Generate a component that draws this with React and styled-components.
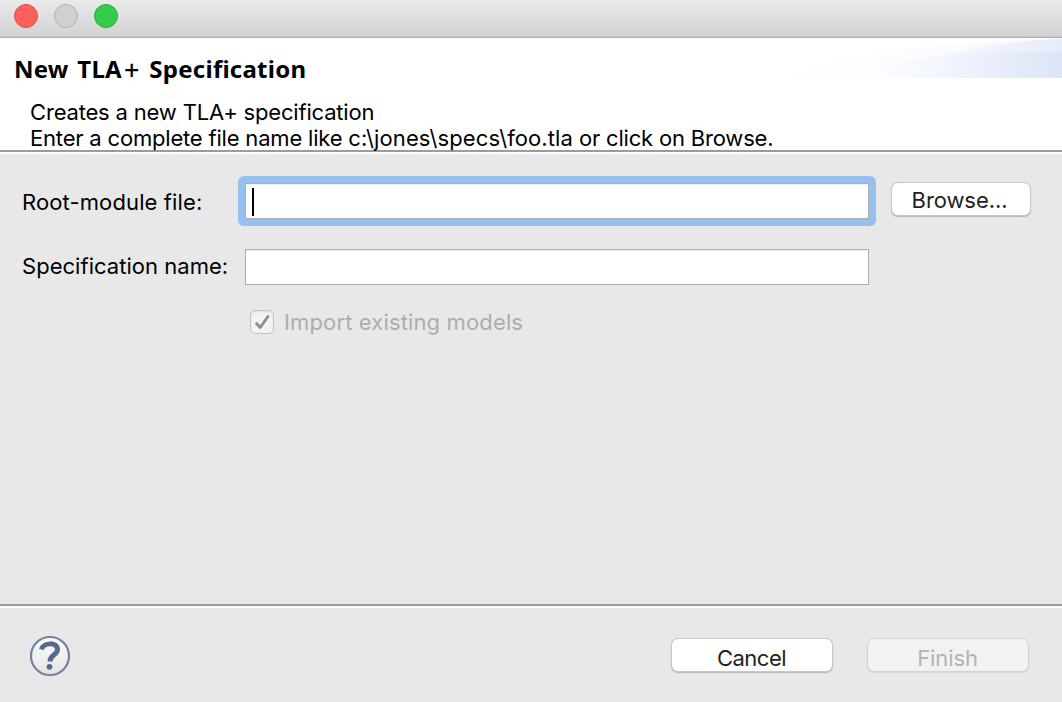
import React from 'react';
import styled, { createGlobalStyle } from 'styled-components';

const GlobalStyle = createGlobalStyle`
  *, *::before, *::after { box-sizing: border-box; }
  body { margin: 0; overflow: hidden; }
`;

const Window = styled.main`
  display: flex;
  flex-direction: column;
  width: 1062px;
  height: 702px;
  background: #e8e8e8;
  color: #000;
  font: 400 22px/26px Inter, 'Liberation Sans', sans-serif;
`;

const TitleBar = styled.div`
  display: flex;
  flex: none;
  gap: 16px;
  height: 38px;
  padding: 4px 14px 0;
  background: linear-gradient(#eaeaea, #d2d2d2);
  border-bottom: 1px solid #adadad;
  box-shadow: inset 0 -1px #c8c8c8;
`;

const WindowLight = styled.span`
  width: 24px;
  height: 24px;
  border: 1px solid ${(p) => p.$edge};
  border-radius: 50%;
  background: ${(p) => p.$fill};
`;

const Header = styled.header`
  position: relative;
  flex: none;
  height: 116px;
  padding: 17px 14px 0;
  background: #fff;
  border-bottom: 2px solid #fff;
  box-shadow: inset 0 -2px #9b9b9b;
`;

const Banner = styled.svg`
  position: absolute;
  top: 0;
  right: 0;
`;

const Title = styled.h1`
  margin: 0 0 16px;
  font: 700 24px/28px 'Noto Sans', 'Open Sans', sans-serif;
  letter-spacing: 0.25px;
  word-spacing: 2.2px;
  white-space: nowrap;
`;

const Plus = styled.span`
  position: relative;
  top: 2px;
  margin: 0 1px 0 2px;
  font-size: 27px;
  line-height: 20px;
  font-weight: 500;
`;

const Message = styled.p`
  margin: 0 0 0 16px;
  line-height: 26px;
  letter-spacing: ${(p) => p.$tracking};
  white-space: nowrap;
`;

const Path = styled.span`
  letter-spacing: 0.1px;
`;

const Form = styled.section`
  display: grid;
  flex: 1;
  grid-template-columns: 223px 624px 140px;
  grid-template-rows: 36px 36px 24px;
  row-gap: 30px;
  padding: 29px 0 0 22px;
`;

const Label = styled.label`
  padding-top: ${(p) => p.$padTop}px;
  letter-spacing: ${(p) => p.$tracking};
  white-space: nowrap;
`;

const FocusRing = styled.div`
  width: 638px;
  height: 50px;
  margin: -7px;
  padding: 7px;
  border-radius: 6px;
  background: #96c0f0;
`;

const Field = styled.div`
  display: flex;
  align-items: center;
  width: 624px;
  height: 36px;
  padding-left: 6px;
  background: #fff;
  border: 1px solid #adadad;
  box-shadow: inset 0 1px #f0f0f0;
`;

const Caret = styled.span`
  width: 2px;
  height: 28px;
  margin-top: 2px;
  background: #000;
`;

const Button = styled.button`
  display: block;
  width: ${(p) => p.$width}px;
  height: 32px;
  margin: ${(p) => p.$margin || '0'};
  padding: ${(p) => p.$padding || '0'};
  border: 0;
  border-radius: 6px;
  background: #fff;
  box-shadow: 0 0 0 1px #c6c6c6, 0 1px 1px 1px #b4b4b4;
  color: #222;
  font: inherit;
  line-height: 26px;
  letter-spacing: ${(p) => p.$tracking};
  text-align: center;
  &:disabled {
    background: #f2f2f2;
    box-shadow: 0 0 0 1px #d3d3d3, 0 1px 1px 1px #d6d6d6;
    color: #b3b3b3;
  }
`;

const CheckRow = styled.div`
  display: flex;
  grid-column: 2;
  align-items: center;
  gap: 10px;
  margin-top: -5px;
  height: 24px;
  padding-left: 5px;
  color: #adadad;
  letter-spacing: 0.14px;
  white-space: nowrap;
`;

const CheckBox = styled.span`
  flex: none;
  width: 24px;
  height: 24px;
  border: 1px solid #c3c3c3;
  border-radius: 5px;
  background: #f3f3f3;
  box-shadow: inset 0 1px 2px #ddd;
  svg { display: block; }
`;

const Footer = styled.footer`
  display: flex;
  flex: none;
  align-items: flex-start;
  height: 98px;
  padding: 33px 34px 0 29px;
  border-top: 2px solid #9b9b9b;
  box-shadow: inset 0 2px #fff;
`;

const HelpIcon = styled.svg`
  display: block;
  margin: -4px auto 0 0;
`;

export default function App() {
  return (
    <Window>
      <GlobalStyle />
      <TitleBar>
        <WindowLight $fill="#fe605b" $edge="#e24c49" />
        <WindowLight $fill="#d0d0d0" $edge="#b2b2b2" />
        <WindowLight $fill="#35cb4b" $edge="#27ae38" />
      </TitleBar>
      <Header>
        <Banner width="280" height="40" viewBox="0 0 280 40" aria-hidden="true">
          <defs>
            <linearGradient id="sweep">
              <stop offset="0" stopColor="#fefeff" />
              <stop offset="1" stopColor="#f8fafe" />
            </linearGradient>
            <linearGradient id="swell" gradientUnits="userSpaceOnUse" x1="130" x2="280">
              <stop offset="0" stopColor="#fafcff" />
              <stop offset=".35" stopColor="#f3f6fe" />
              <stop offset="1" stopColor="#e6ecf9" />
            </linearGradient>
            <linearGradient id="wave" gradientUnits="userSpaceOnUse" x1="80" x2="280">
              <stop offset="0" stopColor="#fdfeff" />
              <stop offset=".35" stopColor="#f4f7fe" />
              <stop offset="1" stopColor="#dde4f6" />
            </linearGradient>
          </defs>
          <path d="M5 40C50 22 115 9 190 4L280 0V40Z" fill="url(#sweep)" />
          <path d="M130 22C180 14 215 3 280 1V30H130Z" fill="url(#swell)" />
          <path d="M80 40V27C130 22 170 14 280 13V40Z" fill="url(#wave)" />
        </Banner>
        <Title>New TLA<Plus>+</Plus> Specification</Title>
        <Message $tracking="-0.18px">Creates a new TLA+ specification</Message>
        <Message $tracking="-0.19px">Enter a complete file name like <Path>c:\jones\specs\foo.tla</Path> or click on Browse.</Message>
      </Header>
      <Form>
        <Label $padTop={6} $tracking="0.12px">Root-module file:</Label>
        <FocusRing><Field><Caret /></Field></FocusRing>
        <Button $width={138} $margin="0 0 0 23px" $padding="1px 3px 0 0" $tracking="-0.08px">Browse...</Button>
        <Label $padTop={4} $tracking="0.03px">Specification name:</Label>
        <Field />
        <CheckRow>
          <CheckBox>
            <svg width="22" height="22" viewBox="0 0 22 22" fill="none" stroke="#8e8e8e" strokeWidth="2.8" strokeLinecap="round" strokeLinejoin="round">
              <path d="M5.5 12.5L9.2 16.5L17 5.5" />
            </svg>
          </CheckBox>
          Import existing models
        </CheckRow>
      </Form>
      <Footer>
        <HelpIcon width="42" height="42" viewBox="0 0 42 42">
          <defs>
            <linearGradient id="disc" x2="0" y2="1">
              <stop offset="0" stopColor="#fbfbfb" />
              <stop offset="1" stopColor="#e4e4e4" />
            </linearGradient>
          </defs>
          <circle cx="21" cy="21" r="19" fill="url(#disc)" stroke="#71839f" strokeWidth="2.2" />
          <path d="M12.500 14.500C14 7.500 28.500 6.500 28.500 14.500C28.500 20 21 19.500 21 26.500" fill="none" stroke="#566b8c" strokeWidth="5" />
          <circle cx="20.500" cy="31.800" r="2.900" fill="#566b8c" />
        </HelpIcon>
        <Button $width={160} $padding="6px 1px 0 0" $tracking="-0.5px">Cancel</Button>
        <Button $width={160} $padding="6px 1px 0 0" $margin="0 0 0 36px" $tracking="-0.1px" disabled>Finish</Button>
      </Footer>
    </Window>
  );
}
